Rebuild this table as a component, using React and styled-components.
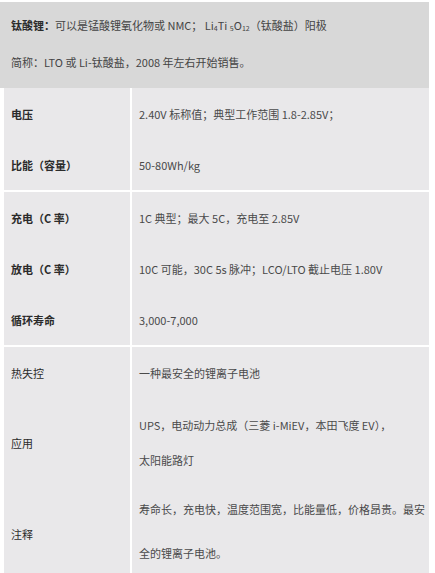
import React from "react";
import styled, { createGlobalStyle } from "styled-components";

const GlobalStyle = createGlobalStyle`
  html, body {
    margin: 0;
    padding: 0;
    background: #ffffff;
  }
  body {
    font-family: "Noto Sans CJK SC", "Noto Sans", sans-serif;
    font-size: 11px;
    color: #4a4a4a;
  }
`;

const Page = styled.div`
  width: 435px;
  height: 573px;
  overflow: hidden;
  padding-top: 2px;
  box-sizing: border-box;
`;

const Intro = styled.div`
  width: 429px;
  background: #d8d8d8;
  padding: 4.5px 7px 7.5px 11px;
  box-sizing: border-box;
`;

const IntroLine = styled.p`
  margin: 0;
  line-height: 37px;
  color: #444;
  white-space: nowrap;
`;

const Strong = styled.b`
  font-weight: 700;
  color: #2b2b2b;
`;

const Sub = styled.sub`
  font-size: 7px;
  vertical-align: -1px;
  line-height: 0;
`;

const Table = styled.div`
  margin-left: 4px;
  width: 425px;
  background: #e9e8ea;
`;

const Group = styled.div`
  & + & {
    border-top: 2px solid #ffffff;
  }
`;

const Row = styled.div`
  display: grid;
  grid-template-columns: 126px 299px;
  height: ${(p) => p.$h}px;
`;

const Label = styled.div`
  display: flex;
  align-items: center;
  padding-left: 7px;
  font-weight: ${(p) => (p.$bold ? 700 : 400)};
  color: #2b2b2b;
  white-space: nowrap;
`;

const Value = styled.div`
  display: flex;
  flex-direction: column;
  justify-content: center;
  border-left: 2px solid #ffffff;
  padding: 0 1px ${(p) => p.$lift || 0}px 7px;
  line-height: ${(p) => p.$lh || 20}px;
  color: #4a4a4a;
`;

const Para = styled.p`
  margin: 0;
`;

const groups = [
  [
    { label: "电压", bold: true, h: 51, value: "2.40V 标称值；典型工作范围 1.8-2.85V；" },
    { label: "比能（容量）", bold: true, h: 51, value: "50-80Wh/kg" },
  ],
  [
    { label: "充电（C 率）", bold: true, h: 51, value: "1C 典型；最大 5C，充电至 2.85V" },
    { label: "放电（C 率）", bold: true, h: 51, value: "10C 可能，30C 5s 脉冲；LCO/LTO 截止电压 1.80V" },
    { label: "循环寿命", bold: true, h: 51, value: "3,000-7,000" },
  ],
  [
    { label: "热失控", h: 52, value: "一种最安全的锂离子电池" },
    {
      label: "应用",
      h: 88,
      lh: 35,
      value: ["UPS，电动动力总成（三菱 i-MiEV，本田飞度 EV），", "太阳能路灯"],
    },
    {
      label: "注释",
      h: 86,
      lh: 44,
      lift: 6,
      value: "寿命长，充电快，温度范围宽，比能量低，价格昂贵。最安全的锂离子电池。",
    },
  ],
];

const App = () => {
  return (
    <Page>
      <GlobalStyle />
      <Intro>
        <IntroLine>
          <Strong>钛酸锂：</Strong>可以是锰酸锂氧化物或 NMC； Li<Sub>4</Sub>Ti{" "}
          <Sub>5</Sub>O<Sub>12</Sub>（钛酸盐）阳极
        </IntroLine>
        <IntroLine>简称：LTO 或 Li-钛酸盐，2008 年左右开始销售。</IntroLine>
      </Intro>
      <Table>
        {groups.map((rows, gi) => (
          <Group key={`group-${gi}`}>
            {rows.map((row) => (
              <Row key={row.label} $h={row.h}>
                <Label $bold={row.bold}>{row.label}</Label>
                <Value $lh={row.lh} $lift={row.lift}>
                  {Array.isArray(row.value) ? (
                    row.value.map((line) => <Para key={line}>{line}</Para>)
                  ) : (
                    <Para>{row.value}</Para>
                  )}
                </Value>
              </Row>
            ))}
          </Group>
        ))}
      </Table>
    </Page>
  );
};

export default App;
